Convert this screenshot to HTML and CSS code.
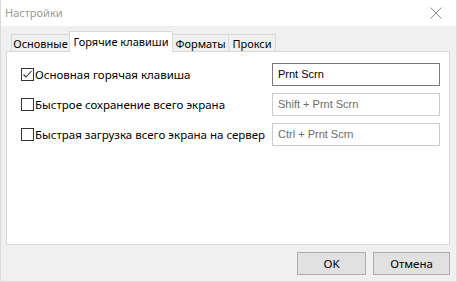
FILE: index.html
```html
<!DOCTYPE html>
<html lang="ru">
<head>
<meta charset="utf-8">
<title>Настройки</title>
<link rel="stylesheet" href="styles.css">
</head>
<body>
<div class="window">
  <div class="titlebar">
    <span class="title">Настройки</span>
    <svg class="close" width="12" height="12" viewBox="0 0 12 12"><path d="M0.5 0.5 L11.5 11.5 M11.5 0.5 L0.5 11.5" stroke="#8c8c8c" stroke-width="1" fill="none"/></svg>
  </div>
  <div class="body">
    <div class="tabs">
      <div class="tab t1">Основные</div>
      <div class="tab active t2">Горячие клавиши</div>
      <div class="tab t3">Форматы</div>
      <div class="tab t4">Прокси</div>
    </div>
    <div class="panel">
      <div class="row">
        <label class="check"><span class="box checked"><svg width="11" height="11" viewBox="0 0 11 11"><path d="M1.5 5.5 L4 8 L9.5 2" stroke="#333" stroke-width="1.1" fill="none"/></svg></span>Основная горячая клавиша</label>
        <div class="field focus">Prnt Scrn</div>
      </div>
      <div class="row">
        <label class="check"><span class="box"></span>Быстрое сохранение всего экрана</label>
        <div class="field dim">Shift + Prnt Scrn</div>
      </div>
      <div class="row">
        <label class="check"><span class="box"></span>Быстрая загрузка всего экрана на сервер</label>
        <div class="field dim">Ctrl + Prnt Scrn</div>
      </div>
    </div>
    <div class="footer">
      <button class="btn ok">OK</button>
      <button class="btn cancel">Отмена</button>
    </div>
  </div>
</div>
</body>
</html>
```

FILE: styles.css
```css
html, body {
  margin: 0;
  padding: 0;
}
body {
  font-family: "Noto Sans", "Open Sans", sans-serif;
  font-size: 11.5px;
  color: #000;
}
.window {
  width: 457px;
  height: 282px;
  box-sizing: border-box;
  border: 1px solid #dadada;
  border-top: none;
  background: #f0f0f0;
  display: flex;
  flex-direction: column;
}
.titlebar {
  height: 26px;
  background: #fff;
  display: flex;
  align-items: center;
  justify-content: space-between;
  padding: 0 14px 0 4px;
  box-sizing: border-box;
}
.title {
  color: #999;
  font-size: 11px;
  line-height: 16px;
}
.body {
  flex: 1;
  display: flex;
  flex-direction: column;
  padding: 6px 6px 0 5px;
}
.tabs {
  display: flex;
  align-items: flex-end;
  padding-left: 5px;
  height: 20px;
  margin-bottom: -1px;
}
.tab {
  height: 18px;
  box-sizing: border-box;
  border: 1px solid #d9d9d9;
  border-bottom: none;
  background: #f0f0f0;
  line-height: 18px;
  text-align: center;
  white-space: nowrap;
  font-size: 11px;
}
.t1 { width: 58px; border-right: none; }
.t3 { width: 56px; border-left: none; }
.t4 { width: 47px; border-left: none; }
.tab.active {
  width: 104px;
  height: 21px;
  background: #fff;
  position: relative;
  z-index: 1;
  line-height: 19px;
}
.panel {
  height: 194px;
  box-sizing: border-box;
  background: #fff;
  border: 1px solid #d9d9d9;
  padding: 11px 9px 0 14px;
  display: flex;
  flex-direction: column;
  gap: 7px;
}
.row {
  display: flex;
  align-items: center;
  justify-content: space-between;
  height: 23px;
}
.check {
  display: flex;
  align-items: center;
  gap: 1px;
  white-space: nowrap;
}
.box {
  width: 13px;
  height: 13px;
  box-sizing: border-box;
  border: 1px solid #333;
  background: #fff;
  display: flex;
  align-items: center;
  justify-content: center;
}
.field {
  width: 168px;
  height: 23px;
  box-sizing: border-box;
  border: 1px solid #cccccc;
  font-family: "Liberation Sans", Arial, sans-serif;
  font-size: 11px;
  line-height: 21px;
  padding-left: 5px;
  color: #6d6d6d;
}
.field.focus {
  border-color: #7a7a7a;
  color: #000;
}
.footer {
  flex: 1;
  display: flex;
  justify-content: flex-end;
  align-items: center;
  gap: 7px;
  padding-top: 1px;
}
.btn {
  font-family: "Noto Sans", "Open Sans", sans-serif;
  font-size: 11.5px;
  height: 23px;
  background: #e1e1e1;
  border: 1px solid #adadad;
  color: #000;
  padding: 0;
  margin: 0;
}
.ok { width: 69px; }
.cancel { width: 77px; }
```
